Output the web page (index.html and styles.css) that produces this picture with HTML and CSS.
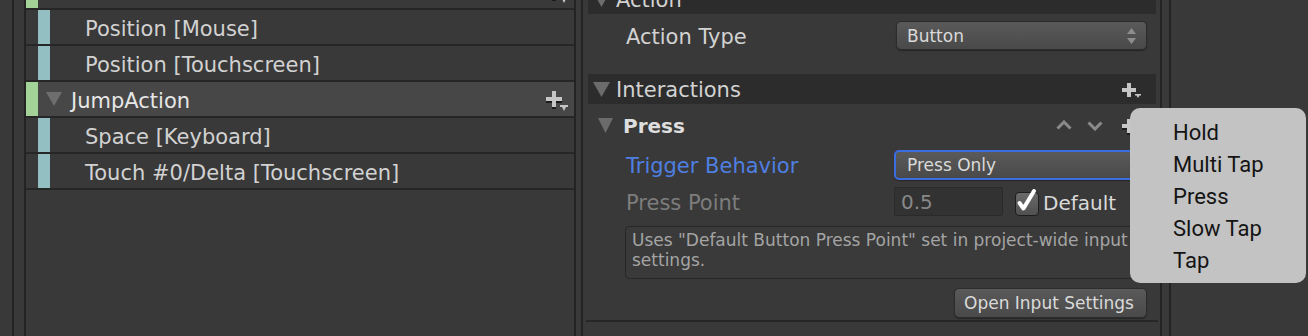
FILE: index.html
```html
<!DOCTYPE html>
<html lang="en">
<head>
  <meta charset="UTF-8">
  <title>Input Actions</title>
  <link rel="stylesheet" href="styles.css">
</head>
<body>
  <div class="rail"></div>
  <div class="rail rail-inner"></div>

  <div class="tree">
    <div class="row">
      <span class="bar bar-action"></span>
      <svg class="fold" width="16" height="14" viewBox="0 0 16 14"><path d="M0 0h16L8 14z"/></svg>
      <span class="name">LookAction</span>
      <svg class="add" width="24" height="23" viewBox="0 0 24 23">
        <path fill="#1b1b1b" d="M7 3h4v6h6v4h-6v6H7v-6H1V9h6z"/>
        <path fill="#c6c6c6" d="M7 1h4v6h6v4h-6v6H7v-6H1V7h6z"/>
        <path fill="#c6c6c6" d="M15 15h8v2h-2l-2 4-2-4h-2z"/>
      </svg>
    </div>
    <div class="row">
      <span class="bar"></span><span class="bar bar-binding"></span>
      <span class="name name-binding">Position [Mouse]</span>
    </div>
    <div class="row">
      <span class="bar"></span><span class="bar bar-binding"></span>
      <span class="name name-binding">Position [Touchscreen]</span>
    </div>
    <div class="row row-selected">
      <span class="bar bar-action"></span>
      <svg class="fold" width="16" height="14" viewBox="0 0 16 14"><path d="M0 0h16L8 14z"/></svg>
      <span class="name">JumpAction</span>
      <svg class="add" width="24" height="23" viewBox="0 0 24 23">
        <path fill="#1b1b1b" d="M7 3h4v6h6v4h-6v6H7v-6H1V9h6z"/>
        <path fill="#c6c6c6" d="M7 1h4v6h6v4h-6v6H7v-6H1V7h6z"/>
        <path fill="#c6c6c6" d="M15 15h8v2h-2l-2 4-2-4h-2z"/>
      </svg>
    </div>
    <div class="row">
      <span class="bar"></span><span class="bar bar-binding"></span>
      <span class="name name-binding">Space [Keyboard]</span>
    </div>
    <div class="row">
      <span class="bar"></span><span class="bar bar-binding"></span>
      <span class="name name-binding">Touch #0/Delta [Touchscreen]</span>
    </div>
  </div>

  <div class="split"></div>

  <div class="inspector">
    <div class="head head-action">
      <svg class="fold" width="17" height="15" viewBox="0 0 17 15"><path d="M0 0h17L8.5 15z"/></svg>
      <span class="head-title">Action</span>
    </div>

    <div class="prop prop-type">
      <span class="prop-label">Action Type</span>
      <div class="dropdown">
        <span>Button</span>
        <svg class="updown" width="9" height="16" viewBox="0 0 9 16"><path d="M4.5 0L9 6H0zM0 10h9l-4.5 6z"/></svg>
      </div>
    </div>

    <div class="head head-interactions">
      <svg class="fold" width="17" height="15" viewBox="0 0 17 15"><path d="M0 0h17L8.5 15z"/></svg>
      <span class="head-title">Interactions</span>
      <svg class="add add-small" width="19" height="16" viewBox="0 0 19 16">
        <path fill="#c6c6c6" d="M5 0h4v5h5v4H9v5H5V9H0V5h5z"/>
        <path fill="#c6c6c6" d="M13 11h6v1.5h-1.5L16 15l-1.5-2.5H13z"/>
      </svg>
    </div>

    <div class="sub-head">
      <svg class="fold" width="15" height="15" viewBox="0 0 15 15"><path d="M0 0h15L7.5 15z"/></svg>
      <span class="sub-title">Press</span>
      <svg class="chevron" width="16" height="10" viewBox="0 0 16 10"><path d="M1.5 8.5L8 2l6.5 6.5"/></svg>
      <svg class="chevron chevron-down" width="16" height="10" viewBox="0 0 16 10"><path d="M1.5 1.5L8 8l6.5-6.5"/></svg>
      <svg class="add add-small" width="19" height="16" viewBox="0 0 19 16">
        <path fill="#1b1b1b" d="M5 2h4v5h5v4H9v5H5v-5H0V7h5z"/>
        <path fill="#c6c6c6" d="M5 0h4v5h5v4H9v5H5V9H0V5h5z"/>
      </svg>
    </div>

    <div class="prop prop-trigger">
      <span class="prop-label prop-label-focus">Trigger Behavior</span>
      <div class="dropdown dropdown-focus">
        <span>Press Only</span>
      </div>
    </div>

    <div class="prop prop-point">
      <span class="prop-label prop-label-off">Press Point</span>
      <div class="number">0.5</div>
      <span class="check">
        <svg width="24" height="28" viewBox="0 0 24 28"><path d="M5.5 15l4 5.5L20 3" fill="none" stroke="#fff" stroke-width="4" stroke-linecap="round" stroke-linejoin="round"/></svg>
      </span>
      <span class="check-label">Default</span>
    </div>

    <div class="help">Uses "Default Button Press Point" set in project-wide input settings.</div>

    <div class="help-actions">
      <button class="button">Open Input Settings</button>
    </div>

    <div class="rule"></div>
  </div>

  <div class="split split-wide"></div>

  <div class="menu">
    <div class="menu-item">Hold</div>
    <div class="menu-item">Multi Tap</div>
    <div class="menu-item">Press</div>
    <div class="menu-item">Slow Tap</div>
    <div class="menu-item">Tap</div>
  </div>
</body>
</html>
```

FILE: styles.css
```css
body {
  margin: 0;
  height: 336px;
  overflow: hidden;
  display: flex;
  align-items: flex-start;
  background-color: #393939;
  font-family: 'DejaVu Sans', sans-serif;
  font-size: 21px;
  color: #d2d2d2;
}

.rail {
  flex: none;
  width: 12px;
  height: 336px;
  border-right: 2px solid #232323;
}

.rail-inner {
  width: 10px;
}

/* action tree */

.tree {
  flex: none;
  width: 548px;
  margin-top: -26px;
}

.row {
  display: flex;
  align-items: center;
  height: 34px;
  border-bottom: 2px solid #262626;
}

.row-selected {
  background-color: #474747;
}

.bar {
  flex: none;
  width: 12px;
  align-self: stretch;
}

.bar-action {
  background-color: #a3d396;
}

.bar-binding {
  background-color: #93bfc3;
}

.tree .fold {
  margin-left: 8px;
  fill: #6e6e6e;
}

.name {
  margin-left: 9px;
  padding-top: 4px;
  color: #e6e6e6;
}

.name-binding {
  margin-left: 35px;
  color: #d2d2d2;
}

.add {
  flex: none;
  margin-left: auto;
}

.row .add {
  margin-right: 5px;
  margin-top: 4px;
}

.split {
  flex: none;
  width: 5px;
  height: 336px;
  border-left: 2px solid #232323;
  border-right: 2px solid #232323;
}

.split-wide {
  width: 7px;
}

/* inspector */

.inspector {
  flex: none;
  width: 572px;
  padding-left: 3px;
  padding-right: 2px;
}

.head {
  display: flex;
  align-items: center;
  height: 30px;
  margin: 0 2px;
  padding: 0 15px 0 5px;
  background-color: #2c2c2c;
}

.head-title {
  padding-top: 2px;
}

.head .fold,
.sub-head .fold {
  fill: #6b6b6b;
  margin-right: 6px;
}

.head-action {
  margin-top: -16px;
}

.head-interactions {
  margin-top: 24px;
}

.add-small {
  margin-top: 4px;
}

.sub-head {
  display: flex;
  align-items: center;
  height: 42px;
  margin: 0 2px;
  padding: 0 15px 0 10px;
}

.sub-head .fold {
  margin-top: 1px;
  margin-right: 10px;
}

.sub-title {
  padding-top: 2px;
  font-size: 20px;
  font-weight: bold;
  color: #dedede;
}

.chevron {
  fill: none;
  stroke: #8a8a8a;
  stroke-width: 3;
}

.sub-title + .chevron {
  margin-left: auto;
}

.chevron-down {
  margin-left: 15px;
  margin-top: 2px;
}

.sub-head .add-small {
  margin-left: 19px;
}

.prop {
  display: flex;
  align-items: center;
  padding-left: 40px;
}

.prop-label {
  flex: none;
  width: 268px;
  padding-top: 2px;
}

.prop-label-focus {
  color: #4f7fe2;
}

.prop-label-off {
  color: #7d7d7d;
}

.prop-type {
  margin-top: 7px;
  height: 29px;
}

.prop-trigger {
  margin-top: 4px;
  height: 30px;
}

.prop-point {
  margin-top: 7px;
  height: 29px;
}

.dropdown {
  display: flex;
  align-items: center;
  box-sizing: border-box;
  width: 251px;
  height: 29px;
  margin-left: 2px;
  padding: 0 10px 0 10px;
  font-size: 17px;
  color: #dadada;
  background: linear-gradient(#5a5a5a, #494949);
  border: 1px solid #2c2c2c;
  border-radius: 5px;
  box-shadow: 0 1px 1px rgba(0, 0, 0, 0.35);
}

.updown {
  margin-left: auto;
  fill: #8d8d8d;
}

.dropdown-focus {
  width: 255px;
  height: 30px;
  margin-left: 0;
  padding-left: 11px;
  border: 2px solid #3a6de2;
}

.number {
  box-sizing: border-box;
  width: 109px;
  height: 29px;
  padding-left: 6px;
  font-size: 20px;
  line-height: 28px;
  color: #888;
  background-color: #323232;
  border: 1px solid #2a2a2a;
  border-radius: 2px;
}

.check {
  position: relative;
  flex: none;
  box-sizing: border-box;
  width: 24px;
  height: 24px;
  margin-left: 12px;
  margin-top: 4px;
  background: linear-gradient(#6a6a6a, #505050);
  border: 1px solid #1e1e1e;
  border-radius: 4px;
}

.check svg {
  position: absolute;
  left: -2px;
  top: -5px;
}

.check-label {
  margin-left: 4px;
  padding-top: 2px;
  font-size: 20px;
  color: #dadada;
}

.help {
  box-sizing: border-box;
  width: 522px;
  height: 53px;
  margin: 10px 0 0 39px;
  padding: 3px 6px;
  font-size: 17px;
  line-height: 20px;
  color: #a4a4a4;
  background-color: #3a3a3a;
  border: 1px solid #272727;
  border-radius: 4px;
}

.help-actions {
  display: flex;
  justify-content: flex-end;
  margin-top: 9px;
  padding-right: 11px;
}

.button {
  box-sizing: border-box;
  width: 193px;
  height: 30px;
  padding: 0 0 0 9px;
  font-family: 'DejaVu Sans', sans-serif;
  font-size: 17px;
  text-align: left;
  color: #dadada;
  background: linear-gradient(#5a5a5a, #494949);
  border: 1px solid #2c2c2c;
  border-radius: 5px;
  box-shadow: 0 1px 1px rgba(0, 0, 0, 0.35);
}

.rule {
  height: 2px;
  margin-top: 2px;
  background-color: #262626;
}

/* popup menu */

.menu {
  position: absolute;
  left: 1130px;
  top: 108px;
  box-sizing: border-box;
  width: 176px;
  height: 175px;
  padding-top: 9px;
  background-color: #c3c3c3;
  border-radius: 10px;
  font-family: Roboto, sans-serif;
  font-size: 22px;
  color: #141414;
}

.menu-item {
  height: 32px;
  line-height: 32px;
  padding-left: 43px;
}
```
